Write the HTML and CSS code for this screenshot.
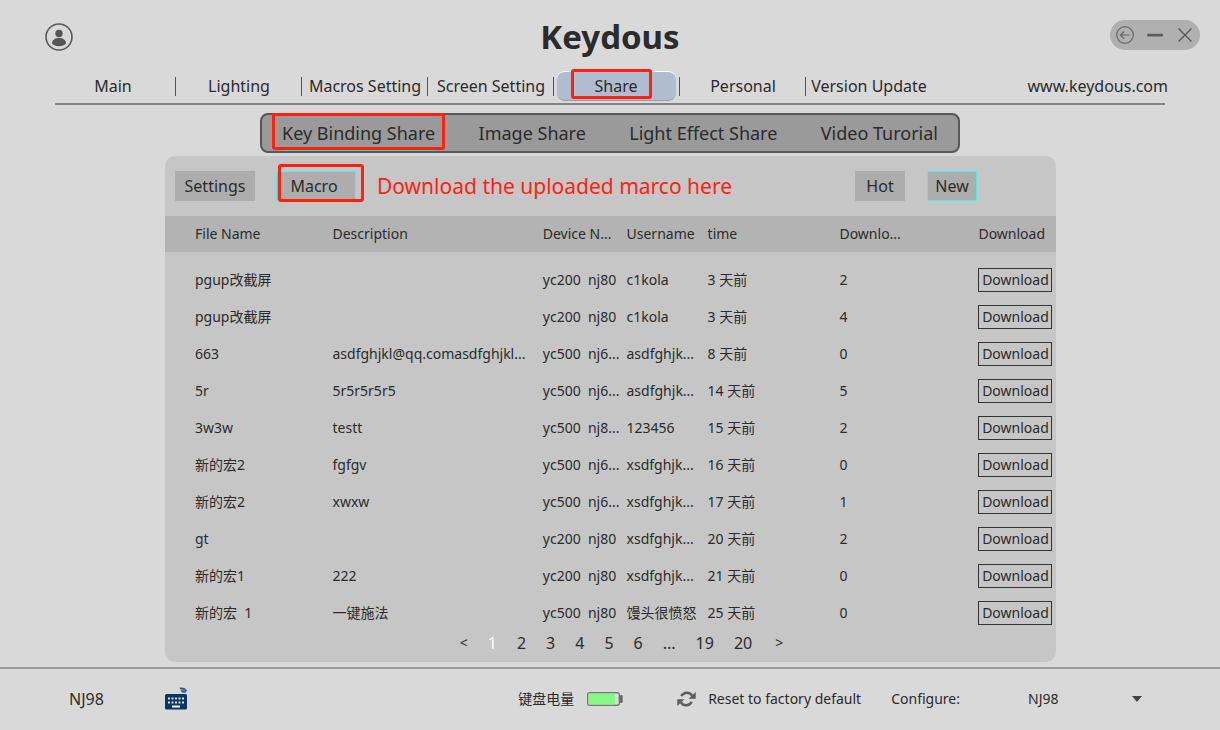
FILE: index.html
```html
<!DOCTYPE html>
<html lang="en">
<head>
<meta charset="utf-8">
<title>Keydous</title>
<link rel="stylesheet" href="styles.css">
</head>
<body>
<div class="app">
  <header class="header">
    <button class="icon-button user" type="button" aria-label="Account">
      <svg width="28" height="28" viewBox="0 0 28 28"><circle cx="14" cy="14" r="13" fill="none" stroke="#585858" stroke-width="1.6"/><circle cx="14" cy="10.500" r="3.700" fill="#555"/><path d="M7 20.500c0-3.400 3-5.400 7-5.400s7 2 7 5.400c-1.500 1.800-4 2.700-7 2.700s-5.500-.900-7-2.700z" fill="#555"/></svg>
    </button>
    <h1 class="title">Keydous</h1>
    <div class="window-controls">
      <button class="icon-button" type="button" aria-label="Back"><svg width="18" height="18" viewBox="0 0 18 18" fill="none" stroke="#666" stroke-width="1.200"><circle cx="9" cy="9" r="8.300"/><path d="M13.500 9h-9M8 5.500L4.500 9 8 12.500"/></svg></button>
      <button class="icon-button" type="button" aria-label="Minimize"><svg width="18" height="18" viewBox="0 0 18 18"><rect x="1" y="7.800" width="16" height="2.600" rx="1" fill="#5a5d5a"/></svg></button>
      <button class="icon-button" type="button" aria-label="Close"><svg width="18" height="18" viewBox="0 0 18 18" stroke="#555" stroke-width="1.300"><path d="M2.500 2.500l13 13M15.500 2.500l-13 13"/></svg></button>
    </div>
  </header>

  <nav class="nav">
    <button class="nav-tab" type="button">Main</button>
    <button class="nav-tab" type="button">Lighting</button>
    <button class="nav-tab" type="button">Macros Setting</button>
    <button class="nav-tab" type="button">Screen Setting</button>
    <button class="nav-tab active" type="button"><span class="pill">Share<i class="mark mark-share"></i></span></button>
    <button class="nav-tab" type="button">Personal</button>
    <button class="nav-tab" type="button">Version Update</button>
    <a class="site" href="#">www.keydous.com</a>
  </nav>

  <div class="subtabs">
    <button class="subtab active" type="button">Key Binding Share<i class="mark mark-binding"></i></button>
    <button class="subtab" type="button">Image Share</button>
    <button class="subtab" type="button">Light Effect Share</button>
    <button class="subtab" type="button">Video Turorial</button>
  </div>

  <main class="panel">
    <div class="toolbar">
      <button class="chip wide" type="button">Settings</button>
      <button class="chip wide selected macro" type="button">Macro<i class="mark mark-macro"></i></button>
      <p class="note">Download the uploaded marco here</p>
      <button class="chip sort" type="button">Hot</button>
      <button class="chip selected" type="button">New</button>
    </div>
    <table class="files">
      <colgroup><col class="c-file"><col class="c-desc"><col class="c-device"><col class="c-user"><col class="c-time"><col class="c-count"><col class="c-action"></colgroup>
      <thead><tr><th>File Name</th><th>Description</th><th>Device N...</th><th>Username</th><th>time</th><th>Downlo...</th><th>Download</th></tr></thead>
      <tbody>
        <tr><td>pgup改截屏</td><td></td><td>yc200&nbsp; nj80</td><td>c1kola</td><td>3 天前</td><td>2</td><td><button class="download" type="button">Download</button></td></tr>
        <tr><td>pgup改截屏</td><td></td><td>yc200&nbsp; nj80</td><td>c1kola</td><td>3 天前</td><td>4</td><td><button class="download" type="button">Download</button></td></tr>
        <tr><td>663</td><td>asdfghjkl@qq.comasdfghjkl...</td><td>yc500&nbsp; nj6...</td><td>asdfghjk...</td><td>8 天前</td><td>0</td><td><button class="download" type="button">Download</button></td></tr>
        <tr><td>5r</td><td>5r5r5r5r5</td><td>yc500&nbsp; nj6...</td><td>asdfghjk...</td><td>14 天前</td><td>5</td><td><button class="download" type="button">Download</button></td></tr>
        <tr><td>3w3w</td><td>testt</td><td>yc500&nbsp; nj8...</td><td>123456</td><td>15 天前</td><td>2</td><td><button class="download" type="button">Download</button></td></tr>
        <tr><td>新的宏2</td><td>fgfgv</td><td>yc500&nbsp; nj6...</td><td>xsdfghjk...</td><td>16 天前</td><td>0</td><td><button class="download" type="button">Download</button></td></tr>
        <tr><td>新的宏2</td><td>xwxw</td><td>yc500&nbsp; nj6...</td><td>xsdfghjk...</td><td>17 天前</td><td>1</td><td><button class="download" type="button">Download</button></td></tr>
        <tr><td>gt</td><td></td><td>yc200&nbsp; nj80</td><td>xsdfghjk...</td><td>20 天前</td><td>2</td><td><button class="download" type="button">Download</button></td></tr>
        <tr><td>新的宏1</td><td>222</td><td>yc200&nbsp; nj80</td><td>xsdfghjk...</td><td>21 天前</td><td>0</td><td><button class="download" type="button">Download</button></td></tr>
        <tr><td>新的宏&nbsp; 1</td><td>一键施法</td><td>yc500&nbsp; nj80</td><td>馒头很愤怒</td><td>25 天前</td><td>0</td><td><button class="download" type="button">Download</button></td></tr>
      </tbody>
    </table>
    <nav class="pages" aria-label="Pages">
      <button class="page arrow" type="button">&lt;</button>
      <button class="page current" type="button">1</button>
      <button class="page" type="button">2</button>
      <button class="page" type="button">3</button>
      <button class="page" type="button">4</button>
      <button class="page" type="button">5</button>
      <button class="page" type="button">6</button>
      <span class="page">...</span>
      <button class="page" type="button">19</button>
      <button class="page" type="button">20</button>
      <button class="page arrow" type="button">&gt;</button>
    </nav>
  </main>

  <footer class="footer">
    <span class="device">NJ98</span>
    <svg class="keyboard" width="22" height="24" viewBox="0 0 22 24"><rect y="7" width="22" height="15.500" rx="1.500" fill="#0b3566"/><path d="M3 11.500h16M3 15.500h16" stroke="#dfe6ee" stroke-width="2" stroke-dasharray="2 1.500"/><path d="M7 19.500h8" stroke="#fff" stroke-width="2"/><path d="M14.500.800c3-.800 6 .200 7.500 2.700l-1.500 2.300-3.500-.300z" fill="#2c5680"/><path d="M15.500 2.800c2-.300 3.500.200 4.800 1.700" fill="none" stroke="#a9b9c9" stroke-width=".800"/></svg>
    <span class="battery-label">键盘电量</span>
    <svg class="battery" width="36" height="14" viewBox="0 0 36 14"><rect x=".700" y=".700" width="31.600" height="12.600" rx="2" fill="#ddd" stroke="#777" stroke-width="1.400"/><rect x="1.500" y="1.500" width="26.500" height="11" fill="#84fa84"/><rect x="33" y="3" width="2.600" height="8" rx="1" fill="#666"/></svg>
    <button class="reset" type="button">
      <svg width="19" height="16" viewBox="0 0 19 16"><g fill="none" stroke="#5c5c5c" stroke-width="2.400"><path d="M4.200 5.200C7 .800 12.200.500 15 4.500"/><path d="M14.800 10.800C12 15.200 6.800 15.500 4 11.500"/></g><path d="M18.700 1v6.800h-7.200zM.300 15V8.200h7.200z" fill="#5c5c5c"/></svg>
      Reset to factory default
    </button>
    <label class="configure-label" for="configure">Configure:</label>
    <div class="select-wrap">
      <select id="configure" class="select"><option>NJ98</option></select>
      <svg class="caret" width="10" height="6" viewBox="0 0 10 6"><path d="M0 0h10L5 6z" fill="#444"/></svg>
    </div>
  </footer>
</div>
</body>
</html>
```
FILE: styles.css
```css
* { box-sizing: border-box; }

body {
  margin: 0;
  background: #d9d9d9;
  color: #2b2b2b;
  font: 14px/20px "Noto Sans", "Noto Sans CJK SC", sans-serif;
}

button, select {
  margin: 0;
  padding: 0;
  border: 0;
  background: none;
  color: inherit;
  font: inherit;
  white-space: nowrap;
}

.app {
  display: flex;
  flex-direction: column;
  min-height: 100vh;
}

.header {
  display: grid;
  grid-template-columns: 1fr auto 1fr;
  align-items: center;
  padding: 16px 20px 0;
}

.icon-button { display: flex; }
.user { justify-self: start; margin-left: 25px; }

.title {
  margin: 0;
  font-size: 33px;
  line-height: 42px;
}

.window-controls {
  display: flex;
  align-items: center;
  justify-content: space-between;
  justify-self: end;
  align-self: start;
  width: 90px;
  height: 30px;
  margin-top: 4px;
  padding: 0 6px;
  border-radius: 15px;
  background: #b0b0b0;
}

.nav {
  display: flex;
  align-items: center;
  margin: 12px 55px 0;
  padding-bottom: 1px;
  border-bottom: 2px solid #838383;
  font-size: 16px;
}

.nav-tab {
  position: relative;
  display: flex;
  flex: 0 1 126px;
  align-items: center;
  justify-content: center;
  height: 32px;
}
.nav-tab:first-child { flex-basis: 121px; padding-right: 5px; }
.nav-tab.active { padding-right: 2px; }
.nav-tab:not(:nth-of-type(7))::after {
  content: "";
  position: absolute;
  right: 0;
  width: 1px;
  height: 19px;
  background: #555;
}

.pill {
  position: relative;
  width: 119px;
  border-top: 1px solid #fff;
  border-bottom: 1px solid #999f9f;
  border-radius: 8px;
  background: #b0bccf;
  line-height: 28px;
}

.site {
  margin: 0 -3px 0 auto;
  color: inherit;
  text-decoration: none;
}

.mark {
  position: absolute;
  border: 3px solid #ff2010;
  border-radius: 3px;
  pointer-events: none;
}
.mark-share { inset: -3px 24px 1px 14px; }
.mark-binding { inset: -2px -10px 1px -10px; }
.mark-macro { inset: -8px -9px -2px 1px; }

.subtabs {
  display: flex;
  align-items: center;
  justify-content: space-between;
  align-self: center;
  min-width: 700px;
  height: 40px;
  margin-top: 8px;
  padding: 0 20px;
  border: 2px solid #555855;
  border-radius: 8px;
  background: #9a9a9a;
  font-size: 18px;
}
.subtab { position: relative; line-height: 36px; }
.subtab.active { box-shadow: inset 0 -1px #4bc8c8; }

.panel {
  margin: 3px 164px 0 165px;
  border-radius: 10px;
  background: #c6c6c6;
}

.toolbar {
  display: flex;
  align-items: center;
  height: 60px;
  padding: 0 79px 0 10px;
}
.chip {
  position: relative;
  width: 50px;
  height: 30px;
  background: #adadad;
  font-size: 16px;
}
.wide { width: 80px; margin-right: 21px; }
.macro { padding-right: 4px; }
.selected { border: 1px solid #45f5f0; }
.note {
  margin: 0;
  color: #ff1f14;
  font-size: 21px;
}
.sort { margin: 0 22px 0 auto; }

.files {
  width: 100%;
  border-collapse: collapse;
  table-layout: fixed;
}
.c-file { width: 18.8%; }
.c-desc { width: 23.6%; }
.c-device { width: 9.4%; }
.c-user { width: 9.1%; }
.c-time { width: 14.8%; }
.c-count { width: 15.6%; }
.c-action { width: 8.7%; }

.files th, .files td {
  height: 37px;
  padding: 0;
  font-weight: 400;
  text-align: left;
  white-space: nowrap;
}
.files th { height: 36px; background: #b3b3b3; }
.files th:first-child, .files td:first-child { padding-left: 30px; }
.files tbody::before { content: ""; display: block; height: 9px; }

.download {
  display: block;
  width: 74px;
  height: 24px;
  border: 1px solid #333;
}

.pages {
  display: flex;
  align-items: center;
  justify-content: center;
  gap: 20px;
  padding: 2px 0 9px 22px;
  font-size: 16px;
}
.current { color: #fff; }
.arrow { font-size: 14px; }
.arrow:last-child { margin-left: 3px; }

.footer {
  display: flex;
  flex: 1;
  align-items: center;
  margin-top: 5px;
  padding: 0 73px 2px 69px;
  border-top: 2px solid #999;
}
.device { width: 96px; font-size: 16px; }
.battery-label { margin-left: auto; }
.battery { margin-left: 13px; }
.reset { display: flex; align-items: center; gap: 12px; margin-left: 54px; }
.configure-label { margin-left: 30px; }
.select-wrap { position: relative; width: 119px; margin-left: 68px; }
.select { width: 100%; appearance: none; }
.caret { position: absolute; top: 7px; right: 5px; pointer-events: none; }
```
